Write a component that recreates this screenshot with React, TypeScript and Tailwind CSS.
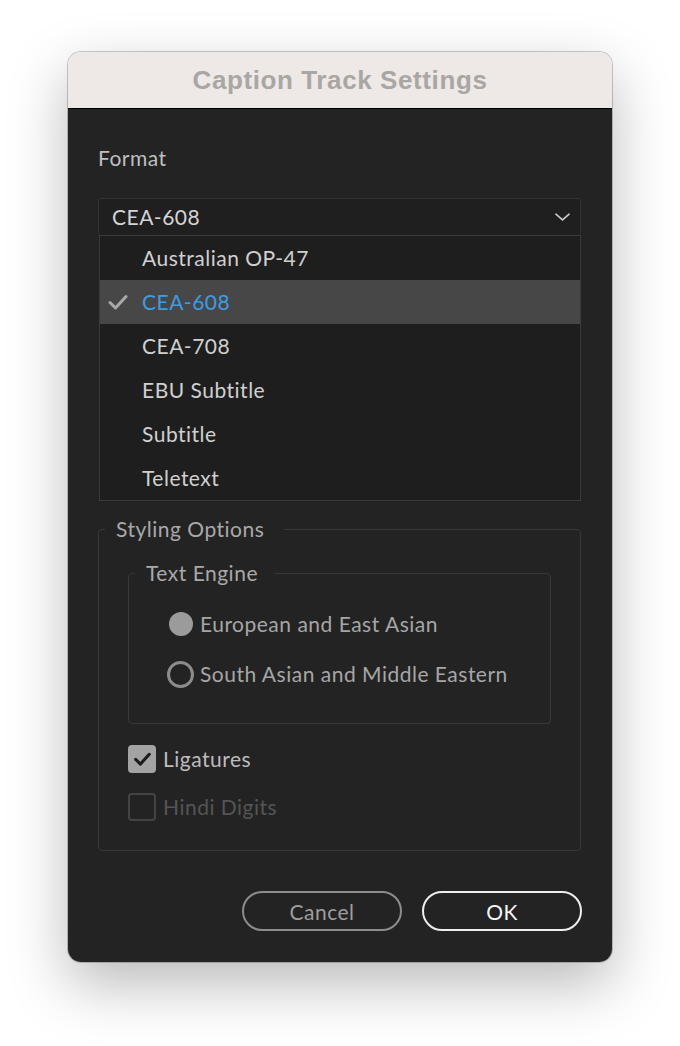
import { useState } from "react";

const FORMATS = [
  "Australian OP-47",
  "CEA-608",
  "CEA-708",
  "EBU Subtitle",
  "Subtitle",
  "Teletext",
];

const Check = ({ className, width = 3 }: { className?: string; width?: number }) => (
  <svg viewBox="0 0 20 16" className={className} fill="none">
    <path
      d="M2 8.5 L7.5 14 L18 2.5"
      stroke="currentColor"
      strokeWidth={width}
      strokeLinecap="round"
      strokeLinejoin="round"
    />
  </svg>
);

const Chevron = () => (
  <svg viewBox="0 0 16 8" className="w-[15px] h-[8px] text-[#c8c8c8]" fill="none">
    <path d="M1 1 L8 7 L15 1" stroke="currentColor" strokeWidth="1.8" strokeLinecap="round" />
  </svg>
);

const Radio = ({ on }: { on: boolean }) => (
  <span className="w-[27px] flex justify-center">
    {on ? (
      <span className="w-[24px] h-[24px] rounded-full bg-[#9b9b9b]" />
    ) : (
      <span className="w-[27px] h-[27px] rounded-full border-[3px] border-[#8c8c8c]" />
    )}
  </span>
);

export default function App() {
  const [format, setFormat] = useState("CEA-608");
  const [engine, setEngine] = useState("european");
  const [ligatures, setLigatures] = useState(true);

  return (
    <div
      className="min-h-[1046px] bg-white pt-[52px] pl-[68px]"
      style={{ fontFamily: "Lato, 'Open Sans', sans-serif" }}
    >
      <div className="w-[544px] h-[910px] rounded-[13px] overflow-hidden ring-1 ring-black/20 shadow-[0_22px_60px_rgba(0,0,0,0.28)] flex flex-col">
        {/* title bar */}
        <div className="h-[57px] shrink-0 bg-[#eee9e6] border-b border-black flex items-center justify-center">
          <span
            className="text-[26px] font-bold tracking-[0.6px] text-[#aaa6a3]"
            style={{ fontFamily: "'Liberation Sans', Arial, sans-serif" }}
          >
            Caption Track Settings
          </span>
        </div>

        <div className="flex-1 bg-[#232323] pl-[30px] pr-[31px] pt-[37px] flex flex-col text-[21px] tracking-[0.5px]">
          <div className="leading-[24px] text-[#bfbfbf]">Format</div>

          {/* select + open menu */}
          <div className="relative mt-[28px]">
            <div className="h-[38px] rounded-[3px] border border-[#333333] bg-[#1f1f1f] pl-[13px] pr-[10px] flex items-center justify-between">
              <span className="text-[#d4d4d4]">{format}</span>
              <Chevron />
            </div>
            <div className="absolute z-10 top-[37px] left-[1px] right-0 bg-[#1e1e1e] border border-[#3a3a3a]">
              {FORMATS.map((f) => {
                const selected = f === format;
                return (
                  <div
                    key={f}
                    onClick={() => setFormat(f)}
                    className={`h-[44px] flex items-center cursor-default ${selected ? "bg-[#474747]" : ""}`}
                  >
                    <span className="w-[42px] pl-[8px] flex items-center">
                      {selected && <Check className="w-[20px] h-[16px] text-[#a9a9a9]" />}
                    </span>
                    <span className={selected ? "text-[#3d9ce6]" : "text-[#d0d0d0]"}>{f}</span>
                  </div>
                );
              })}
            </div>
          </div>

          {/* Styling options */}
          <fieldset className="mt-[281px] border border-[#383838] rounded-[4px] p-0">
            <legend className="ml-[6px] pl-[11px] pr-[20px] leading-[24px] text-[#a9a9a9]">
              Styling Options
            </legend>

            <div className="px-[29px] pb-[19px]">
              <fieldset className="mt-[20px] border border-[#383838] rounded-[4px] p-0">
                <legend className="ml-[6px] pl-[11px] pr-[17px] leading-[24px] text-[#a9a9a9]">
                  Text Engine
                </legend>
                <div className="pl-[38px] pt-[14px] pb-[24px]">
                  <label
                    className="h-[50px] flex items-center gap-[6px] text-[#a6a6a6]"
                    onClick={() => setEngine("european")}
                  >
                    <Radio on={engine === "european"} />
                    European and East Asian
                  </label>
                  <label
                    className="h-[50px] flex items-center gap-[6px] text-[#a6a6a6]"
                    onClick={() => setEngine("south")}
                  >
                    <Radio on={engine === "south"} />
                    South Asian and Middle Eastern
                  </label>
                </div>
              </fieldset>

              <label
                className="mt-[11px] h-[48px] flex items-center gap-[7px] text-[#bdbdbd]"
                onClick={() => setLigatures(!ligatures)}
              >
                {ligatures ? (
                  <span className="w-[28px] h-[28px] rounded-[4px] bg-[#a3a3a3] flex items-center justify-center">
                    <Check className="w-[17px] h-[14px] text-[#1c1c1c]" width={3.6} />
                  </span>
                ) : (
                  <span className="w-[28px] h-[28px] rounded-[4px] border-2 border-[#8c8c8c]" />
                )}
                Ligatures
              </label>
              <label className="h-[48px] flex items-center gap-[7px] text-[#555555]">
                <span className="w-[28px] h-[28px] rounded-[4px] border-2 border-[#444444]" />
                Hindi Digits
              </label>
            </div>
          </fieldset>

          <div className="mt-[40px] flex justify-end gap-[20px] mr-[-1px]">
            <button className="w-[160px] h-[40px] rounded-full border-2 border-[#8d8d8d] text-[#9e9e9e] leading-none">
              Cancel
            </button>
            <button className="w-[160px] h-[40px] rounded-full border-2 border-[#eeeeee] text-[#f5f5f5] leading-none">
              OK
            </button>
          </div>
        </div>
      </div>
    </div>
  );
}
